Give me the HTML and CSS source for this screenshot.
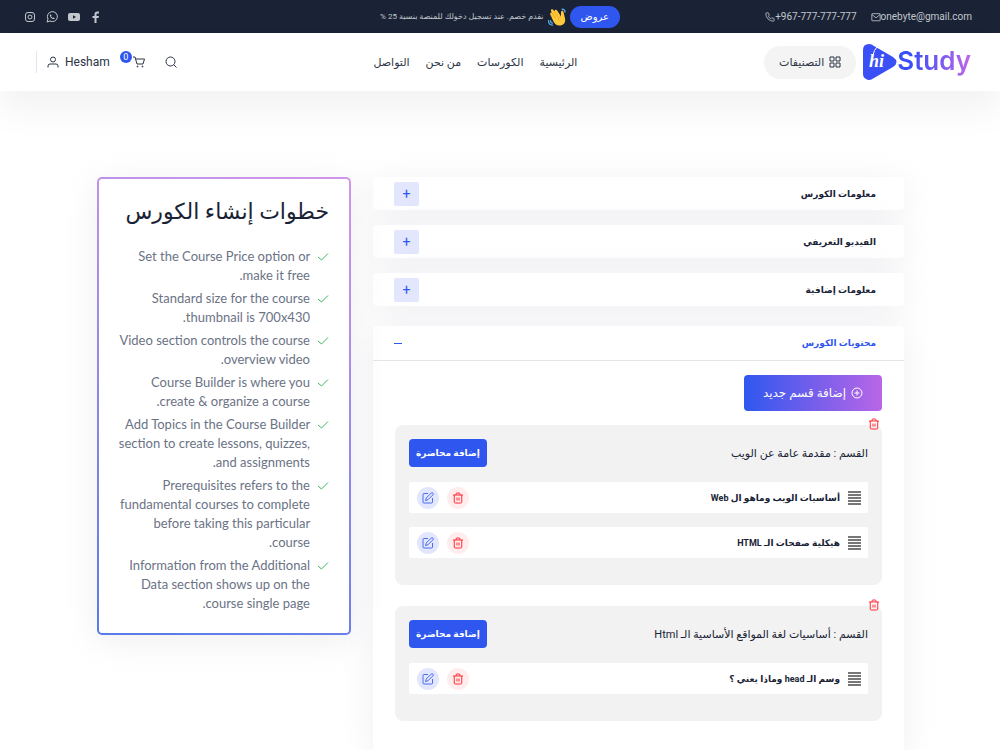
FILE: index.html
```html
<!DOCTYPE html>
<html lang="ar" dir="rtl">
<head>
    <meta charset="UTF-8">
    <meta name="viewport" content="width=device-width, initial-scale=1.0">
    <title>hiStudy</title>
    <link rel="stylesheet" href="styles.css">
</head>
<body>
    <!-- shared icons -->
    <svg class="sprite" aria-hidden="true">
        <symbol id="i-trash" viewBox="0 0 24 24"><path d="M2 6h20M8 6V4a2 2 0 0 1 2-2h4a2 2 0 0 1 2 2v2M4.500 6v14a2 2 0 0 0 2 2h11a2 2 0 0 0 2-2V6M10 11v6M14 11v6"/></symbol>
        <symbol id="i-edit" viewBox="0 0 24 24"><path d="M12 3H4a2 2 0 0 0-2 2v15a2 2 0 0 0 2 2h15a2 2 0 0 0 2-2v-8"/><path d="M18.500 2a2.500 2.500 0 0 1 3.500 3.500L12 15.500l-5 1.500 1.500-5z"/></symbol>
        <symbol id="i-check" viewBox="0 0 24 24"><path d="M22 5 9 18l-7-6"/></symbol>
        <symbol id="i-menu" viewBox="0 0 13 14"><path d="M0 1h13M0 4h13M0 7h13M0 10h13M0 13h13"/></symbol>
    </svg>

    <div class="top-bar">
        <div class="contact" dir="ltr">
            <a href="tel:+967777777777"><svg class="icon" viewBox="0 0 24 24"><path d="M22 17v3a2 2 0 0 1-2 2A18 18 0 0 1 2 4a2 2 0 0 1 2-2h3a2 2 0 0 1 2 2l1 4-2 2a16 16 0 0 0 6 6l2-2 4 1a2 2 0 0 1 2 2z"/></svg>+967-777-777-777</a>
            <a href="mailto:onebyte@gmail.com"><svg class="icon" viewBox="0 0 24 24"><rect x="2" y="4" width="20" height="17" rx="1"/><path d="m2 6 10 8L22 6"/></svg>onebyte@gmail.com</a>
        </div>
        <div class="offer">
            <a href="#" class="offer-badge">عروض</a>
            <svg class="wave" viewBox="0 0 36 36" aria-hidden="true">
                <path fill="#ffc93c" d="M5 14c-2-4 1-6 3-4L6 6c-1-4 3-5 5-2l2 3c0-4 4-5 6-1l7 11V9c0-4 4-5 5-1l3 13c2 9-4 14-11 14-6 0-9-3-12-8z"/>
                <path fill="none" stroke="#e89b1c" stroke-width="1.500" d="m8 10 7 11M13 7l7 11M26 17c-4 1-6 4-5 8"/>
                <path fill="none" stroke="#5dadec" stroke-width="2.500" stroke-linecap="round" d="M28 2c4 0 6 2 6 6M1 25c0 5 3 9 8 9M5 25c0 3 2 5 4 5"/>
            </svg>
            <span>نقدم خصم. عند تسجيل دخولك للمنصة بنسبة 25 %</span>
        </div>
        <div class="social" dir="ltr">
            <a href="#" aria-label="Instagram"><svg class="icon" viewBox="0 0 24 24"><rect x="3" y="3" width="18" height="18" rx="5"/><circle cx="12" cy="12" r="4"/><path d="M17 6.500h.5"/></svg></a>
            <a href="#" aria-label="WhatsApp"><svg class="icon" viewBox="0 0 24 24"><path d="m2 22 2-6a10 10 0 1 1 4 4z"/><path d="M8 7c-1 5 4 10 9 9v-2l-3-1-1 1-3-3 1-1-1-3z" fill="currentColor" stroke="none"/></svg></a>
            <a href="#" aria-label="YouTube"><svg class="icon" viewBox="0 0 24 24"><path fill="currentColor" stroke="none" fill-rule="evenodd" d="M4 4h16q4 0 4 4v8q0 4-4 4H4q-4 0-4-4V8q0-4 4-4zm6 4.500v7l6-3.500z"/></svg></a>
            <a href="#" aria-label="Facebook"><svg class="icon" viewBox="0 0 24 24"><path fill="currentColor" stroke="none" d="M9 24V14H5v-4h4V6.500C9 2.500 11 1 15 1h3v4h-3q-2 0-2 2v3h5l-1 4h-4v10z"/></svg></a>
        </div>
    </div>

    <header class="header">
        <div class="brand">
            <a href="#" class="logo" dir="ltr">
                <svg viewBox="0 0 34 36" aria-hidden="true">
                    <path fill="#3a4ff5" d="M0 6Q0 0 6 0q3 0 5 2l19 11q7 5 0 10L11 34Q7 37 4 35.500 0 34 0 30z"/>
                    <path fill="none" stroke="#fff" stroke-width="1" d="M14 3q-3 3-4 8"/>
                    <text x="6" y="23" class="logo-hi">hi</text>
                </svg>
                <span>Study</span>
            </a>
            <button type="button" class="categories">
                <svg class="icon" viewBox="0 0 24 24"><path d="M2 2h8v8H2zM14 2h8v8h-8zM2 14h8v8H2zM14 14h8v8h-8z"/></svg>
                التصنيفات
            </button>
        </div>
        <nav class="nav">
            <a href="#">الرئيسية</a>
            <a href="#">الكورسات</a>
            <a href="#">من نحن</a>
            <a href="#">التواصل</a>
        </nav>
        <div class="tools" dir="ltr">
            <a href="#" class="user"><svg class="icon" viewBox="0 0 24 24"><circle cx="12" cy="7" r="5"/><path d="M2 23v-3a4 4 0 0 1 4-4h12a4 4 0 0 1 4 4v3"/></svg>Hesham</a>
            <a href="#" class="cart" aria-label="Cart"><span class="count">0</span><svg class="icon" viewBox="0 0 24 24"><path d="M0 2h4l4 14h12l3-10H5"/><circle cx="9" cy="21" r="1"/><circle cx="19" cy="21" r="1"/></svg></a>
            <button type="button" class="search" aria-label="Search"><svg class="icon" viewBox="0 0 24 24"><circle cx="11" cy="11" r="9"/><path d="m17 17 6 6"/></svg></button>
        </div>
    </header>

    <main class="page">
        <div class="accordion">
            <h2 class="card"><button type="button" class="row">معلومات الكورس <span class="plus">+</span></button></h2>
            <h2 class="card"><button type="button" class="row">الفيديو التعريفي <span class="plus">+</span></button></h2>
            <h2 class="card"><button type="button" class="row">معلومات إضافية <span class="plus">+</span></button></h2>

            <section class="card card-open">
                <h2><button type="button" class="row row-open" aria-expanded="true">محتويات الكورس <span class="minus"></span></button></h2>
                <div class="card-body">
                    <button type="button" class="btn-section">
                        <svg class="icon" viewBox="0 0 24 24"><circle cx="12" cy="12" r="10"/><path d="M12 7v10M7 12h10"/></svg>
                        إضافة قسم جديد
                    </button>

                    <div class="topic">
                        <button type="button" class="topic-delete" aria-label="حذف القسم"><svg class="icon"><use href="#i-trash"/></svg></button>
                        <div class="topic-head">
                            <h3>القسم : مقدمة عامة عن الويب</h3>
                            <button type="button" class="btn-lesson">إضافة محاضرة</button>
                        </div>
                        <ul class="lessons">
                            <li>
                                <svg class="icon menu"><use href="#i-menu"/></svg>
                                <span class="name">أساسيات الويب وماهو ال Web</span>
                                <button type="button" class="round delete" aria-label="حذف"><svg class="icon"><use href="#i-trash"/></svg></button>
                                <button type="button" class="round edit" aria-label="تعديل"><svg class="icon"><use href="#i-edit"/></svg></button>
                            </li>
                            <li>
                                <svg class="icon menu"><use href="#i-menu"/></svg>
                                <span class="name">هيكلية صفحات الـ HTML</span>
                                <button type="button" class="round delete" aria-label="حذف"><svg class="icon"><use href="#i-trash"/></svg></button>
                                <button type="button" class="round edit" aria-label="تعديل"><svg class="icon"><use href="#i-edit"/></svg></button>
                            </li>
                        </ul>
                    </div>

                    <div class="topic">
                        <button type="button" class="topic-delete" aria-label="حذف القسم"><svg class="icon"><use href="#i-trash"/></svg></button>
                        <div class="topic-head">
                            <h3>القسم : أساسيات لغة المواقع الأساسية الـ Html</h3>
                            <button type="button" class="btn-lesson">إضافة محاضرة</button>
                        </div>
                        <ul class="lessons">
                            <li>
                                <svg class="icon menu"><use href="#i-menu"/></svg>
                                <span class="name">وسم الـ head وماذا يعني ؟</span>
                                <button type="button" class="round delete" aria-label="حذف"><svg class="icon"><use href="#i-trash"/></svg></button>
                                <button type="button" class="round edit" aria-label="تعديل"><svg class="icon"><use href="#i-edit"/></svg></button>
                            </li>
                        </ul>
                    </div>
                </div>
            </section>
        </div>

        <aside class="tips">
            <h2>خطوات إنشاء الكورس</h2>
            <ul>
                <li><svg class="icon"><use href="#i-check"/></svg><span>Set the Course Price option or make it free.</span></li>
                <li><svg class="icon"><use href="#i-check"/></svg><span>Standard size for the course thumbnail is 700x430.</span></li>
                <li><svg class="icon"><use href="#i-check"/></svg><span>Video section controls the course overview video.</span></li>
                <li><svg class="icon"><use href="#i-check"/></svg><span>Course Builder is where you create &amp; organize a course.</span></li>
                <li><svg class="icon"><use href="#i-check"/></svg><span>Add Topics in the Course Builder section to create lessons, quizzes, and assignments.</span></li>
                <li><svg class="icon"><use href="#i-check"/></svg><span>Prerequisites refers to the fundamental courses to complete before taking this particular course.</span></li>
                <li><svg class="icon"><use href="#i-check"/></svg><span>Information from the Additional Data section shows up on the course single page.</span></li>
            </ul>
        </aside>
    </main>
</body>
</html>
```
FILE: styles.css
```css
* {
    box-sizing: border-box;
    margin: 0;
    padding: 0;
}
body {
    display: flex;
    flex-direction: column;
    min-height: 100vh;
    background: #fff;
    color: #192335;
    font-family: Roboto, "DejaVu Sans", sans-serif;
    font-size: 12px;
}
a {
    color: inherit;
    text-decoration: none;
}
button {
    border: none;
    background: none;
    color: inherit;
    font: inherit;
    cursor: pointer;
}
ul {
    list-style: none;
}
.sprite {
    position: absolute;
    width: 0;
    height: 0;
}
.icon {
    width: 12px;
    height: 12px;
    flex: none;
    fill: none;
    stroke: currentColor;
    stroke-width: 2;
}

/* top bar */
.top-bar {
    display: grid;
    grid-template-columns: 1fr auto 1fr;
    align-items: center;
    height: 33px;
    padding: 0 24px;
    background: #192335;
    color: #c3c7cd;
    font-size: 10px;
}
.contact {
    display: flex;
    justify-content: flex-end;
    gap: 14px;
    margin-right: 4px;
}
.contact a {
    display: flex;
    align-items: center;
}
.contact .icon {
    width: 10px;
    height: 10px;
}
.offer {
    display: flex;
    align-items: center;
    gap: 4px;
    font-size: 8px;
}
.offer-badge {
    padding: 0 11px;
    border-radius: 11px;
    background: #2f57ef;
    color: #fff;
    font-size: 10px;
    line-height: 22px;
}
.wave {
    width: 18px;
    height: 18px;
}
.social {
    display: flex;
    gap: 10px;
}
.social a {
    display: flex;
}

/* header */
.header {
    display: flex;
    align-items: center;
    justify-content: space-between;
    height: 58px;
    padding: 0 29px 0 36px;
    background: #fff;
    color: #2b3445;
    box-shadow: 0 20px 34px rgba(0, 0, 0, 0.05);
}
.brand {
    display: flex;
    align-items: center;
    gap: 7px;
}
.logo {
    display: flex;
    align-items: center;
}
.logo svg {
    width: 34px;
    height: 36px;
}
.logo-hi {
    fill: #fff;
    font: italic bold 18px "Liberation Serif", serif;
}
.logo span {
    padding-bottom: 2px;
    background: linear-gradient(90deg, #3a4ff5 20%, #c065ea);
    -webkit-background-clip: text;
    background-clip: text;
    color: transparent;
    font: 600 26px/36px Inter, sans-serif;
}
.categories {
    display: flex;
    align-items: center;
    gap: 5px;
    height: 33px;
    padding: 0 15px;
    border-radius: 17px;
    background: #f4f4f4;
    font-size: 11px;
}
.nav {
    display: flex;
    gap: 16px;
    font-size: 11px;
}
.tools {
    display: flex;
    align-items: center;
    gap: 10px;
    padding-right: 10px;
}
.tools a {
    display: flex;
}
.tools .user {
    align-items: center;
    gap: 6px;
    height: 22px;
    padding-left: 10px;
    border-left: 1px solid #e6e3f1;
}
.count {
    width: 12px;
    height: 12px;
    margin: -5px 1px 0 0;
    border-radius: 50%;
    background: #2f57ef;
    color: #fff;
    font-size: 9px;
    line-height: 12px;
    text-align: center;
}
.search {
    display: flex;
    padding-left: 10px;
}

/* page */
.page {
    display: grid;
    grid-template-columns: 23fr 11fr;
    gap: 22px;
    flex: 1;
    padding: 86px 96px 0 97px;
}
.accordion {
    display: flex;
    flex-direction: column;
    gap: 15px;
}
.card {
    border-radius: 4px;
    background: #fff;
    box-shadow: 0 6px 34px rgba(215, 216, 222, 0.4);
}
.card-open {
    flex: 1;
    margin-top: 5px;
    border-radius: 4px 4px 0 0;
}
.row {
    display: flex;
    align-items: center;
    justify-content: space-between;
    width: 100%;
    height: 33px;
    padding: 0 28px 0 21px;
    font-size: 9px;
    font-weight: bold;
}
.row-open {
    height: 35px;
    border-bottom: 1px solid #e5e5e8;
    color: #2f57ef;
}
.plus {
    width: 25px;
    border-radius: 2px;
    background: #e2e7fd;
    color: #2f57ef;
    font-size: 14px;
    font-weight: normal;
    line-height: 24px;
}
.minus {
    width: 8px;
    height: 1px;
    background: #2f57ef;
}
.card-body {
    padding: 14px 22px;
}
.btn-section {
    display: flex;
    align-items: center;
    gap: 5px;
    height: 36px;
    padding: 0 19px;
    border-radius: 4px;
    background: linear-gradient(90deg, #2f57ef, #b966e7);
    color: #fff;
    font-size: 12px;
}

/* topics */
.topic {
    position: relative;
    margin-top: 14px;
    padding: 14px 14px 27px;
    border-radius: 8px;
    background: #f2f2f2;
}
.topic + .topic {
    margin-top: 21px;
}
.topic-delete {
    position: absolute;
    top: -7px;
    right: 2px;
    color: #ff2b36;
}
.topic-head {
    display: flex;
    align-items: center;
    justify-content: space-between;
}
.topic-head h3 {
    font-size: 11px;
    font-weight: normal;
}
.btn-lesson {
    height: 28px;
    padding: 0 7px;
    border-radius: 4px;
    background: #2f57ef;
    color: #fff;
    font-size: 9px;
    font-weight: bold;
}
.lessons {
    display: grid;
    gap: 14px;
    margin-top: 15px;
}
.lessons li {
    display: flex;
    align-items: center;
    gap: 8px;
    height: 31px;
    padding: 0 7px 0 8px;
    border-radius: 2px;
    background: #fff;
}
.lessons .name {
    flex: 1;
    font-size: 9px;
    font-weight: bold;
}
.lessons .menu {
    width: 13px;
    height: 14px;
    color: #777;
}
.round {
    display: grid;
    place-items: center;
    width: 22px;
    height: 22px;
    border-radius: 50%;
}
.delete {
    background: #ffeded;
    color: #ff2b36;
}
.edit {
    background: #e2e7fd;
    color: #4a6cf0;
}

/* tips */
.tips {
    align-self: start;
    padding: 19px 20px 20px 16px;
    border: 2px solid transparent;
    border-radius: 5px;
    background: linear-gradient(#fff, #fff) padding-box, linear-gradient(200deg, #d296ea, #587be8) border-box;
    box-shadow: 0 6px 34px rgba(215, 216, 222, 0.4);
}
.tips h2 {
    margin-bottom: 21px;
    font-size: 22px;
    font-weight: normal;
    line-height: 28px;
    white-space: nowrap;
}
.tips ul {
    display: grid;
    gap: 4px;
}
.tips li {
    display: flex;
    gap: 7px;
    color: #6b7385;
    font-family: Lato, sans-serif;
    font-size: 13px;
    line-height: 19px;
}
.tips .icon {
    margin-top: 4px;
    color: #3eb75e;
}
```
